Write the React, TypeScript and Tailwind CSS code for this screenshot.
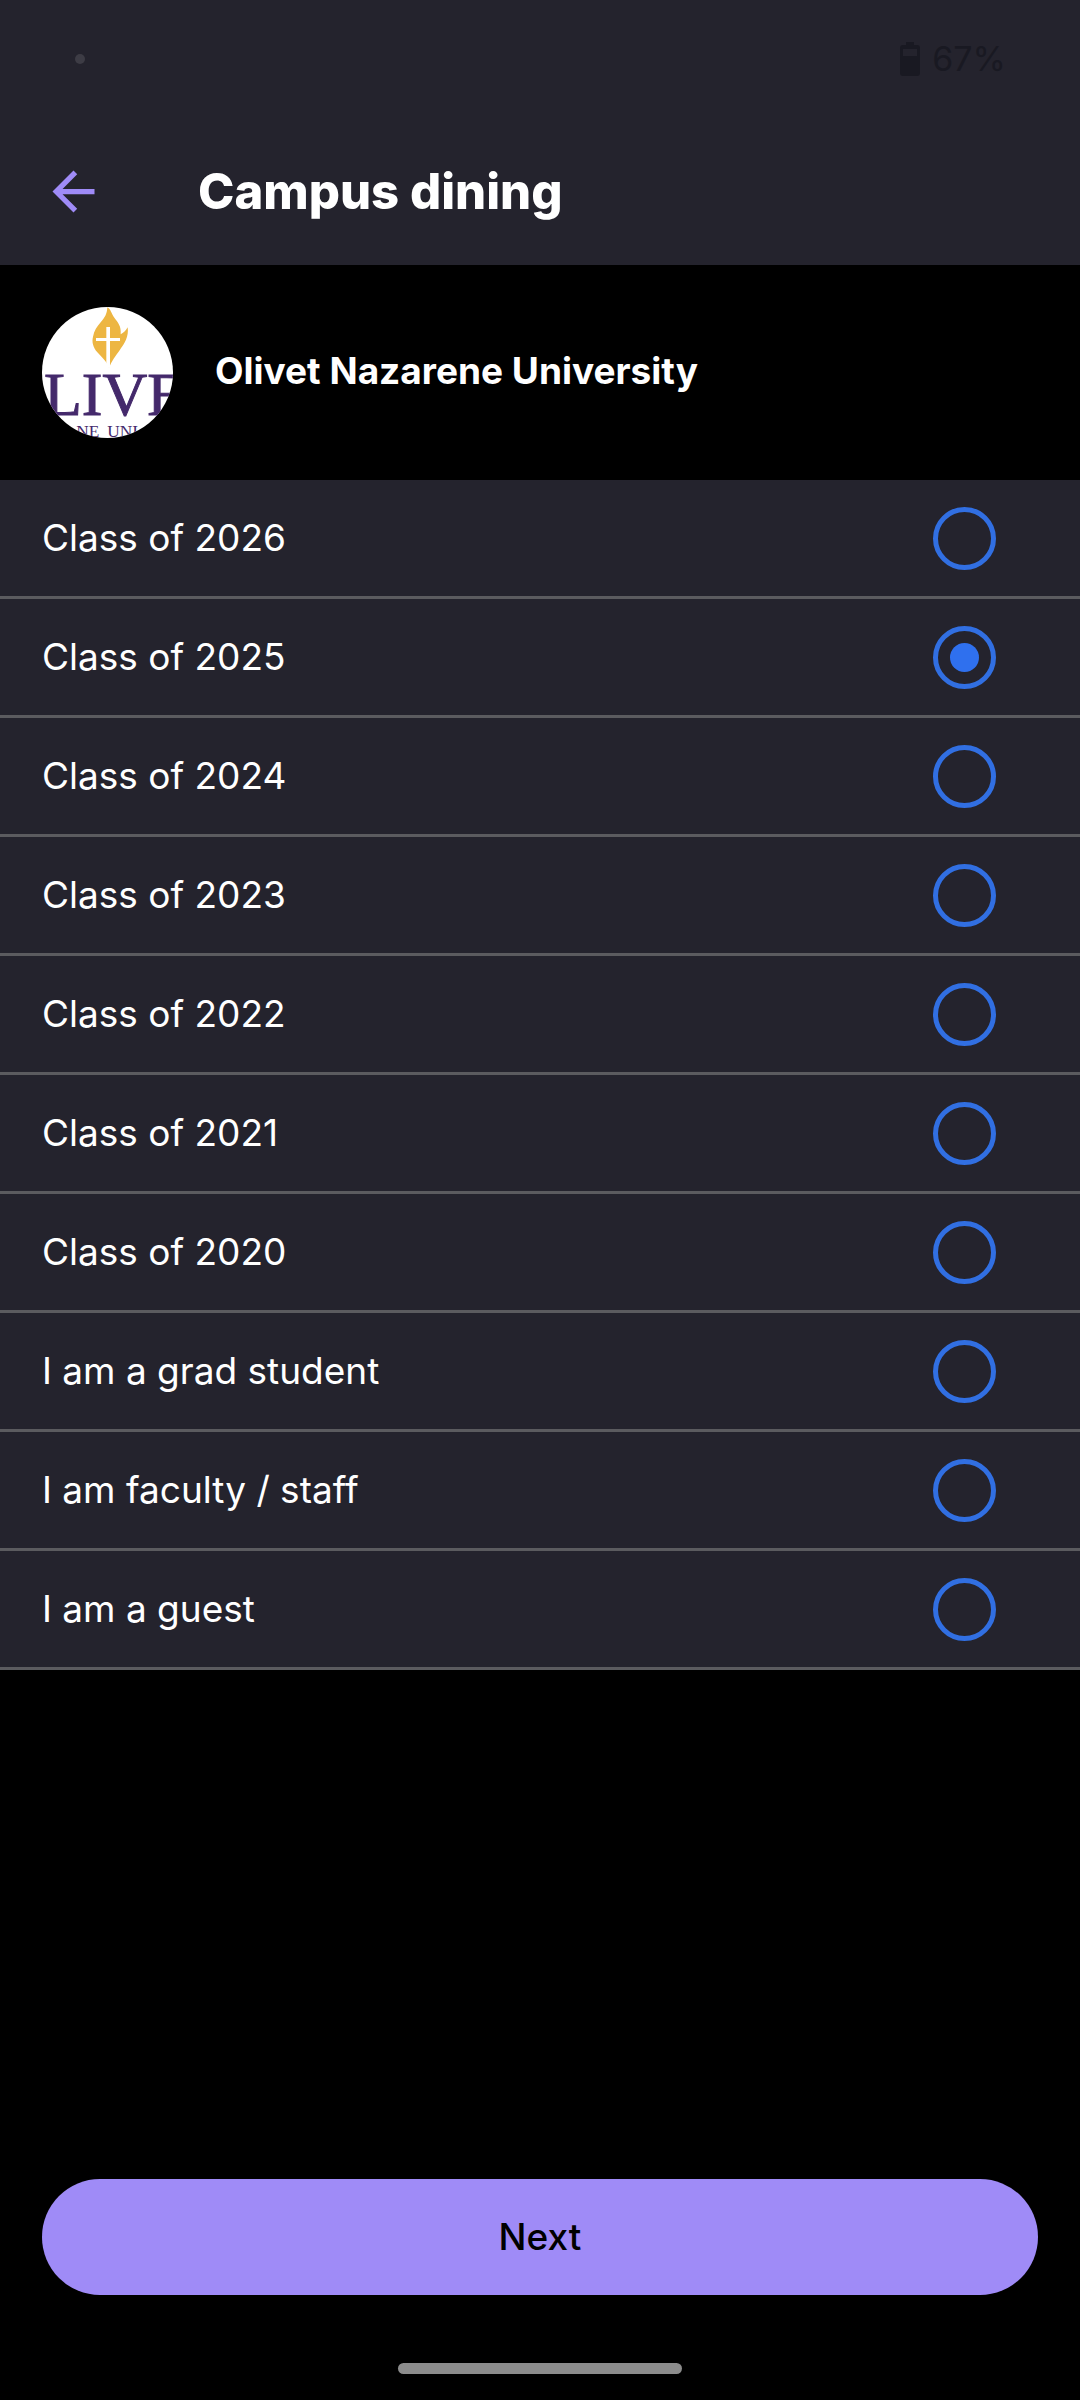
import { useState } from "react";

const OPTIONS = [
  "Class of 2026",
  "Class of 2025",
  "Class of 2024",
  "Class of 2023",
  "Class of 2022",
  "Class of 2021",
  "Class of 2020",
  "I am a grad student",
  "I am faculty / staff",
  "I am a guest",
];

function StatusBar() {
  return (
    <div className="flex h-[118px] items-center justify-between pr-[74px] pl-[75px]">
      <span className="size-[10px] rounded-full bg-[#3d3c45]" />
      <div className="flex items-center gap-3 text-[#191922]">
        <svg viewBox="0 0 20 34" className="h-[34px] w-5" aria-hidden="true">
          <path
            fill="currentColor"
            fillRule="evenodd"
            d="M6 0h8v3h3a3 3 0 0 1 3 3v25a3 3 0 0 1-3 3H3a3 3 0 0 1-3-3V6a3 3 0 0 1 3-3h3zM3 7v7h14V7z"
          />
        </svg>
        <span className="text-[34px] leading-10">67%</span>
      </div>
    </div>
  );
}

function SchoolLogo() {
  return (
    <svg
      viewBox="36 51 393 393"
      className="size-[131px] shrink-0 rounded-full bg-white"
      role="img"
      aria-label="Olivet Nazarene University logo"
    >
      <path
        fill="#edb642"
        d="M232 52C242 57 244 70 252 82C264 98 274 108 272 133C280 129 288 122 293 112C297 140 284 160 268 182C256 199 245 212 237 233C229 212 215 202 202 187C189 171 185 156 189 140C192 122 201 110 212 97C225 82 231 72 232 52Z"
      />
      <path fill="#fff" d="M229 111h11v33h30v9h-30v80h-11v-80h-31v-9h31z" />
      <g fill="#44296b" fontFamily="'Liberation Serif', serif">
        <text x="42" y="376" fontSize="186" stroke="#44296b" strokeWidth="3">
          LIVE
        </text>
        <text x="208" y="440" fontSize="52" textAnchor="end">
          NE
        </text>
        <text x="232" y="440" fontSize="52">
          UNI
        </text>
      </g>
    </svg>
  );
}

export default function App() {
  const [selected, setSelected] = useState("Class of 2025");

  return (
    <div className="flex min-h-screen flex-col bg-black font-['Inter',sans-serif] text-white">
      <header className="bg-[#24232d]">
        <StatusBar />
        <div className="flex h-[147px] items-center gap-[93px] px-[42px]">
          <button type="button" aria-label="Back" className="text-[#9f8bf7]">
            <svg viewBox="0 0 24 24" className="size-[63px]" fill="currentColor" aria-hidden="true">
              <path d="M20 11H7.83l5.59-5.59L12 4l-8 8 8 8 1.41-1.41L7.83 13H20z" />
            </svg>
          </button>
          <h1 className="text-[49px] leading-[56px] font-extrabold">Campus dining</h1>
        </div>
      </header>

      <section className="flex items-center gap-[42px] px-[42px] py-[42px]">
        <SchoolLogo />
        <h2 className="pb-1 text-[37px] leading-[44px] font-bold">Olivet Nazarene University</h2>
      </section>

      <main className="flex flex-1 flex-col">
        <fieldset>
          <legend className="sr-only">Your class or role</legend>
          {OPTIONS.map((option) => (
            <label
              key={option}
              className="flex h-[119px] cursor-pointer items-center justify-between border-b-[3px] border-[#5b5b5f] bg-[#24232d] pr-[84px] pl-[42px] text-[37px] leading-[44px] font-normal"
            >
              {option}
              <input
                type="radio"
                name="affiliation"
                checked={selected === option}
                onChange={() => setSelected(option)}
                className="grid size-[63px] appearance-none place-items-center rounded-full border-5 border-[#316fe2] checked:after:size-[29px] checked:after:rounded-full checked:after:bg-[#2f70ee] checked:after:content-['']"
              />
            </label>
          ))}
        </fieldset>
      </main>

      <footer className="flex flex-col items-center px-[42px] pt-[42px] pb-[26px]">
        <button
          type="button"
          className="h-[116px] w-full rounded-full bg-[#9f8bf7] text-[37px] leading-[44px] font-medium text-black"
        >
          Next
        </button>
        <span className="mt-[68px] h-[11px] w-[284px] rounded-full bg-[#8c8c8c]" />
      </footer>
    </div>
  );
}
